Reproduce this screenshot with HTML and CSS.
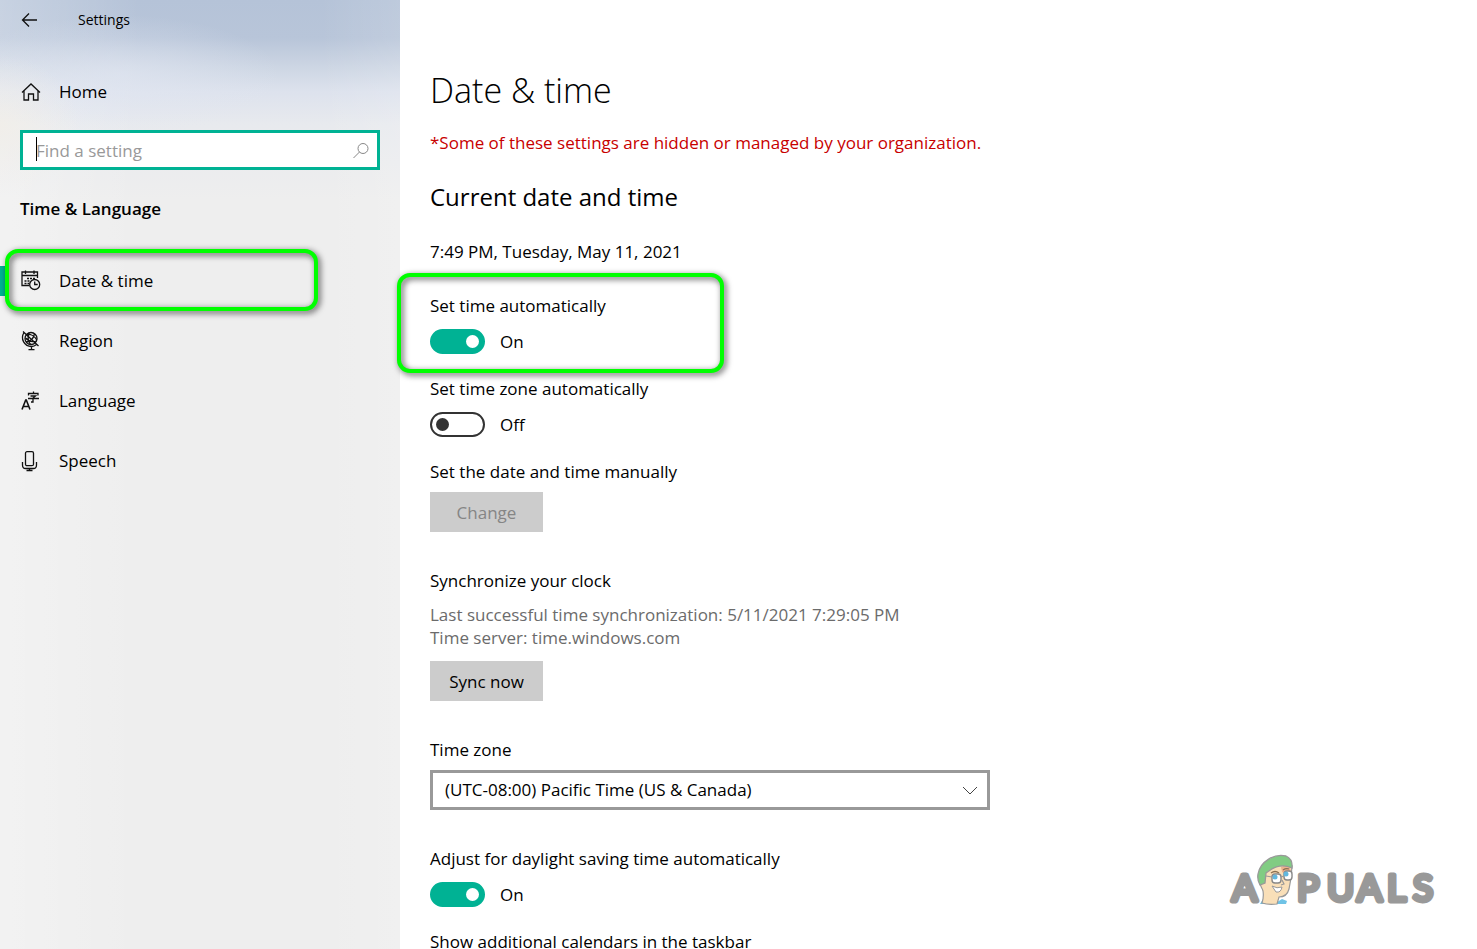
FILE: index.html
```html
<!DOCTYPE html>
<html lang="en">
<head>
<meta charset="utf-8">
<title>Settings</title>
<meta name="viewport" content="width=device-width, initial-scale=1">
<link rel="stylesheet" href="styles.css">
</head>
<body>
<div class="window">
  <aside class="sidebar">
    <header class="titlebar">
      <button class="back" type="button" aria-label="Back">
        <svg width="18" height="16" viewBox="0 0 18 16"><path d="M17 8H2.500M9 1.500 2.500 8 9 14.500"/></svg>
      </button>
      <span class="app-name">Settings</span>
    </header>
    <a class="nav-link home" href="#">
      <svg class="icon" width="20" height="20" viewBox="0 0 20 20"><path d="M1 10.500 10 2l9 8.500M3 9v9h4.500v-6h5v6H17V9"/></svg>
      <span>Home</span>
    </a>
    <div class="search">
      <input class="search-input" type="text" placeholder="Find a setting" aria-label="Find a setting">
      <span class="caret"></span>
      <svg class="search-icon" width="18" height="18" viewBox="0 0 18 18"><circle cx="11" cy="6.500" r="5"/><path d="M7.500 10 1.500 16"/></svg>
    </div>
    <h2 class="group-title">Time &amp; Language</h2>
    <nav class="nav">
      <a class="nav-link active" href="#">
        <svg class="icon" width="20" height="20" viewBox="0 0 20 20"><path d="M8.500 14.500H1V1h15.500v6M1 4.500h15.500M4.500-.5v3.500M13-.5v3.500"/><path class="dots" d="M6 7.500h8M3.500 10h5M3.500 12.500h5"/><circle cx="13.700" cy="13.500" r="5"/><path d="M13.700 10.500v3h3"/></svg>
        <span>Date &amp; time</span>
        <span class="highlight highlight-nav"></span>
      </a>
      <a class="nav-link" href="#">
        <svg class="icon" width="20" height="20" viewBox="0 0 20 20"><circle cx="10" cy="7.500" r="6"/><path d="M2 .5 17.500 15M3 1.500C-1 8 3.500 15.500 10.500 15.500c2 0 3.500-.7 5-2M10.500 15.500v3M7.500 18.700h6"/><path d="M4.500 7c3 3 7 4.500 11 3M6 3.500c4-.5 8 2 9.800 5.500M8 2c-1.500 4-1 8 1.500 11.500M13.500 3c-1 4-4 7.500-8.500 8"/></svg>
        <span>Region</span>
      </a>
      <a class="nav-link" href="#">
        <svg class="icon" width="20" height="20" viewBox="0 0 20 20"><path d="M1 18.500 4.700 9h.6L9 18.500M2.300 15.500h5.400" stroke-width="1.600"/><path d="M12.500.500v2M7.500 4.500v-2h9.500v2M9.500 5h5l-2.500 2v4h-2M7 7.500h11"/></svg>
        <span>Language</span>
      </a>
      <a class="nav-link" href="#">
        <svg class="icon" width="20" height="20" viewBox="0 0 20 20"><rect x="4.500" y="0.700" width="8" height="14" rx="1.500"/><path d="M1.500 11v3q0 3.500 3 3.500h8q3 0 3-3.500v-3M8.500 17.500v2M5.500 19.500h6"/></svg>
        <span>Speech</span>
      </a>
    </nav>
  </aside>

  <main class="content">
    <h1 class="page-title">Date &amp; time</h1>
    <p class="notice">*Some of these settings are hidden or managed by your organization.</p>
    <h2 class="section-title">Current date and time</h2>
    <p class="now">7:49 PM, Tuesday, May 11, 2021</p>

    <div class="setting">
      <label for="auto-time">Set time automatically</label>
      <div class="toggle-row"><input class="toggle" id="auto-time" type="checkbox" role="switch" checked><span>On</span></div>
      <span class="highlight highlight-setting"></span>
    </div>
    <div class="setting">
      <label for="auto-zone">Set time zone automatically</label>
      <div class="toggle-row"><input class="toggle" id="auto-zone" type="checkbox" role="switch"><span>Off</span></div>
    </div>
    <div class="block">
      <p>Set the date and time manually</p>
      <button class="button" type="button" disabled>Change</button>
    </div>
    <div class="block">
      <p>Synchronize your clock</p>
      <p class="details">Last successful time synchronization: 5/11/2021 7:29:05 PM<br>Time server: time.windows.com</p>
      <button class="button" type="button">Sync now</button>
    </div>
    <div class="block">
      <label for="zone">Time zone</label>
      <div class="select-box">
        <select class="select" id="zone"><option>(UTC-08:00) Pacific Time (US &amp; Canada)</option></select>
        <svg class="chevron" width="16" height="10" viewBox="0 0 16 10"><path d="M1 1l7 7 7-7"/></svg>
      </div>
    </div>
    <div class="setting">
      <label for="dst">Adjust for daylight saving time automatically</label>
      <div class="toggle-row"><input class="toggle" id="dst" type="checkbox" role="switch" checked><span>On</span></div>
    </div>
    <div class="setting"><p>Show additional calendars in the taskbar</p></div>
  </main>

  <svg class="watermark" width="210" height="60" viewBox="0 0 210 60" role="img" aria-label="Appuals">
    <text class="watermark-text" x="3" y="49">A</text>
    <text class="watermark-text" x="68 98 128 158 184" y="49">PUALS</text>
    <path d="M31 52l3-5 9 5zM45 52l8-5 5 2-1 3z" fill="#6fc3e6"/>
    <path d="M30 26C30 34 33 35 34 39q1 6-1 12 6 2 15 1l2-7q8 0 10-8l2-11 1-12-12-3-16 7z" fill="#f9dfb8" stroke="#999" stroke-width="1.200"/>
    <path d="M52 15l8-3 2 8-5 2-4-2z" fill="#eeb18d"/>
    <path d="M29 22C31 10 45 1 57 4q7 3 6 12C52 11 43 16 37 21l-1 10-5 2q-3-5-2-11z" fill="#81cc83" stroke="#999" stroke-width="1.300"/>
    <path d="M42 21q4-3 8 0M54 18q3-2 6-1" fill="none" stroke="#8a6f50" stroke-width="1.300"/>
    <rect x="43" y="22" width="9" height="9" rx="3" fill="#fff" stroke="#888" stroke-width="1.400"/>
    <rect x="55" y="19" width="8" height="9" rx="3" fill="#fff" stroke="#888" stroke-width="1.400"/>
    <circle cx="46" cy="25" r="2.500" fill="#61b8df"/><circle cx="57" cy="22" r="2.500" fill="#61b8df"/>
    <path d="M37 24l6 1M52 25l3-1M53 28l2 4-3 1" fill="none" stroke="#999" stroke-width="1.200"/>
    <path d="M43 34q5 3 10 1-1 6-6 5z" fill="#fff" stroke="#999" stroke-width="1"/>
  </svg>
</div>
</body>
</html>
```

FILE: styles.css
```css
* { box-sizing: border-box; }

body {
  margin: 0;
  background: #fff;
  color: #000;
  font: 17px/24px "Open Sans", "Noto Sans", sans-serif;
}

h1, h2, p { margin: 0; }
label { display: block; }
button, input, select { font: inherit; color: inherit; }

.window {
  position: relative;
  display: flex;
  height: 100vh;
  overflow: hidden;
}

/* Sidebar */
.sidebar {
  flex: 0 0 400px;
  background:
    radial-gradient(ellipse 80px 70px at 0 125px, rgba(242, 238, 230, .7), rgba(242, 238, 230, 0)),
    radial-gradient(ellipse 160px 60px at 120px 75px, rgba(226, 231, 242, .6), rgba(226, 231, 242, 0)),
    linear-gradient(to right, rgba(255, 255, 255, .25), rgba(255, 255, 255, 0) 35%, rgba(255, 255, 255, 0) 80%, rgba(255, 255, 255, .12)),
    linear-gradient(#b5c3d8, #b8c5d9 38px, #ccd5e3 66px, #dde2ed 92px, #e8eaee 125px, #eee 200px, #eee);
}

.titlebar {
  display: flex;
  align-items: center;
  height: 40px;
  padding-left: 20px;
  font-size: 14px;
}

.back {
  display: flex;
  width: 58px;
  padding: 0;
  border: 0;
  background: none;
}

.back path, .icon, .search-icon, .chevron { fill: none; stroke: #111; stroke-width: 1.3; }
.icon { overflow: visible; }

.nav-link {
  position: relative;
  display: flex;
  align-items: center;
  gap: 18px;
  height: 60px;
  padding-left: 21px;
  color: inherit;
  text-decoration: none;
}

.home { margin: 22px 0 8px; }
.dots { stroke-dasharray: 2 1; }

.active::before {
  content: "";
  position: absolute;
  left: 0;
  width: 6px;
  height: 30px;
  background: #00b294;
}

.search {
  position: relative;
  margin: 0 20px;
}

.search-input {
  display: block;
  width: 100%;
  height: 40px;
  padding: 0 40px 0 13px;
  border: 3px solid #00b294;
  border-radius: 0;
  outline: 0;
  background: #fff;
}

.search-input::placeholder { color: #999; opacity: 1; }

.caret {
  position: absolute;
  left: 16px;
  top: 7px;
  width: 1px;
  height: 24px;
  background: #000;
}

.search-icon { position: absolute; right: 10px; top: 12px; stroke: #888; stroke-width: 1; }

.group-title {
  margin: 27px 20px 30px;
  font-size: 17px;
  line-height: 24px;
  font-weight: 600;
}

/* Callout frames */
.highlight {
  position: absolute;
  border: 4px solid #0f0;
  border-radius: 13px;
  filter: drop-shadow(2px 2px 3px rgba(0, 0, 0, .7));
  pointer-events: none;
}

.highlight-nav { left: 5px; right: 82px; top: -2px; bottom: 0; }
.highlight-setting { left: -33px; top: -21px; width: 327px; bottom: -19px; }

/* Content */
.content {
  flex: 1;
  min-width: 0;
  padding: 66px 30px 0;
}

.page-title {
  margin-bottom: 17px;
  font-size: 34px;
  line-height: 48px;
  font-weight: 300;
}

.notice { color: #c80000; }

.section-title {
  margin: 26px 0 27px;
  font-size: 24px;
  line-height: 32px;
  font-weight: 400;
}

.now { margin-bottom: 30px; }

.setting { position: relative; margin-bottom: 23px; }

.toggle-row {
  display: flex;
  align-items: center;
  gap: 15px;
  height: 25px;
  margin-top: 11px;
}

.toggle {
  appearance: none;
  display: flex;
  align-items: center;
  width: 55px;
  height: 25px;
  margin: 0;
  padding: 0 4px;
  border: 2px solid #333;
  border-radius: 13px;
  background: #fff;
}

.toggle::before {
  content: "";
  width: 13px;
  height: 13px;
  border-radius: 50%;
  background: #333;
}

.toggle:checked { justify-content: flex-end; border-color: #00b294; background: #00b294; }
.toggle:checked::before { background: #fff; }

.block { margin-bottom: 37px; }

.button {
  display: block;
  width: 113px;
  height: 40px;
  margin-top: 8px;
  padding: 2px 0 0;
  border: 0;
  background: #ccc;
}

.button:disabled { color: #858585; }

.details {
  margin: 10px 0 12px;
  line-height: 23px;
  color: #6b6b6b;
}

.select-box {
  position: relative;
  max-width: 560px;
  margin-top: 8px;
}

.select {
  display: block;
  appearance: none;
  width: 100%;
  height: 40px;
  padding: 0 40px 0 12px;
  border: 3px solid #999;
  border-radius: 0;
  background: #fff;
}

.chevron { position: absolute; right: 12px; top: 16px; stroke: #444; stroke-width: 1; }

/* Watermark */
.watermark { position: absolute; right: 38px; bottom: 37px; overflow: visible; }

.watermark-text {
  font: 400 37px Lato, sans-serif;
  fill: #999;
  stroke: #999;
  stroke-width: 5px;
  stroke-linejoin: round;
}
```
